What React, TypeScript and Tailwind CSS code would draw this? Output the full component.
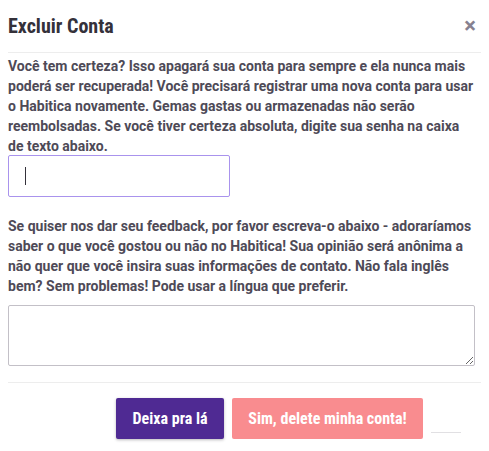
import React from "react";

const condensed = { fontFamily: '"Roboto Condensed", "Liberation Sans Narrow", Roboto, sans-serif' };

export default function App() {
	return (
		<div className="w-[489px] h-[451px] bg-white overflow-hidden" style={{ fontFamily: "Roboto, sans-serif" }}>
			<div className="h-[52px] flex items-center justify-between pl-2 pr-[13px]">
				<h2 className="text-[20px] font-bold text-[#34313a]" style={condensed}>Excluir Conta</h2>
				<span className="text-[#878190] text-[22px] font-bold leading-none">×</span>
			</div>
			<div className="mx-2 border-t border-[#ededed]" />
			<div className="px-2 pt-[3px] text-[14px] leading-[20px] font-bold text-[#4e4a57]">
				<p className="pr-[5px]">
					Você tem certeza? Isso apagará sua conta para sempre e ela nunca mais poderá ser recuperada! Você precisará registrar uma nova conta para usar o Habitica novamente. Gemas gastas ou armazenadas não serão reembolsadas. Se você tiver certeza absoluta, digite sua senha na caixa de texto abaixo.
				</p>
				<div className="-mt-px w-[222px] h-[42px] border border-[#a993ed] rounded-[2px] flex items-center pl-4">
					<span className="w-px h-[18px] bg-[#34313a]" />
				</div>
				<p className="mt-[19px] pr-1">
					Se quiser nos dar seu feedback, por favor escreva-o abaixo - adoraríamos saber o que você gostou ou não no Habitica! Sua opinião será anônima a não quer que você insira suas informações de contato. Não fala inglês bem? Sem problemas! Pode usar a língua que preferir.
				</p>
				<textarea className="mt-[9px] block w-[467px] h-[61px] border border-[#c3c0c7] rounded-[2px] resize-y" />
			</div>
			<div className="mx-2 mt-[16px] border-t border-[#ededed]" />
			<div className="flex items-start pl-[116px] pt-[15px] gap-2">
				<button className="w-[108px] h-[41px] rounded-[2px] bg-[#4f2a93] text-white text-[16px] font-bold shadow-[0_1px_3px_rgba(26,24,29,0.3)]" style={condensed}>
					Deixa pra lá
				</button>
				<button className="w-[191px] h-[41px] rounded-[2px] bg-[#f98c8f] text-white text-[16px] font-bold" style={condensed}>
					Sim, delete minha conta!
				</button>
				<div className="mt-[34px] w-[30px] h-px bg-[#e1e0e3]" />
			</div>
		</div>
	);
}
